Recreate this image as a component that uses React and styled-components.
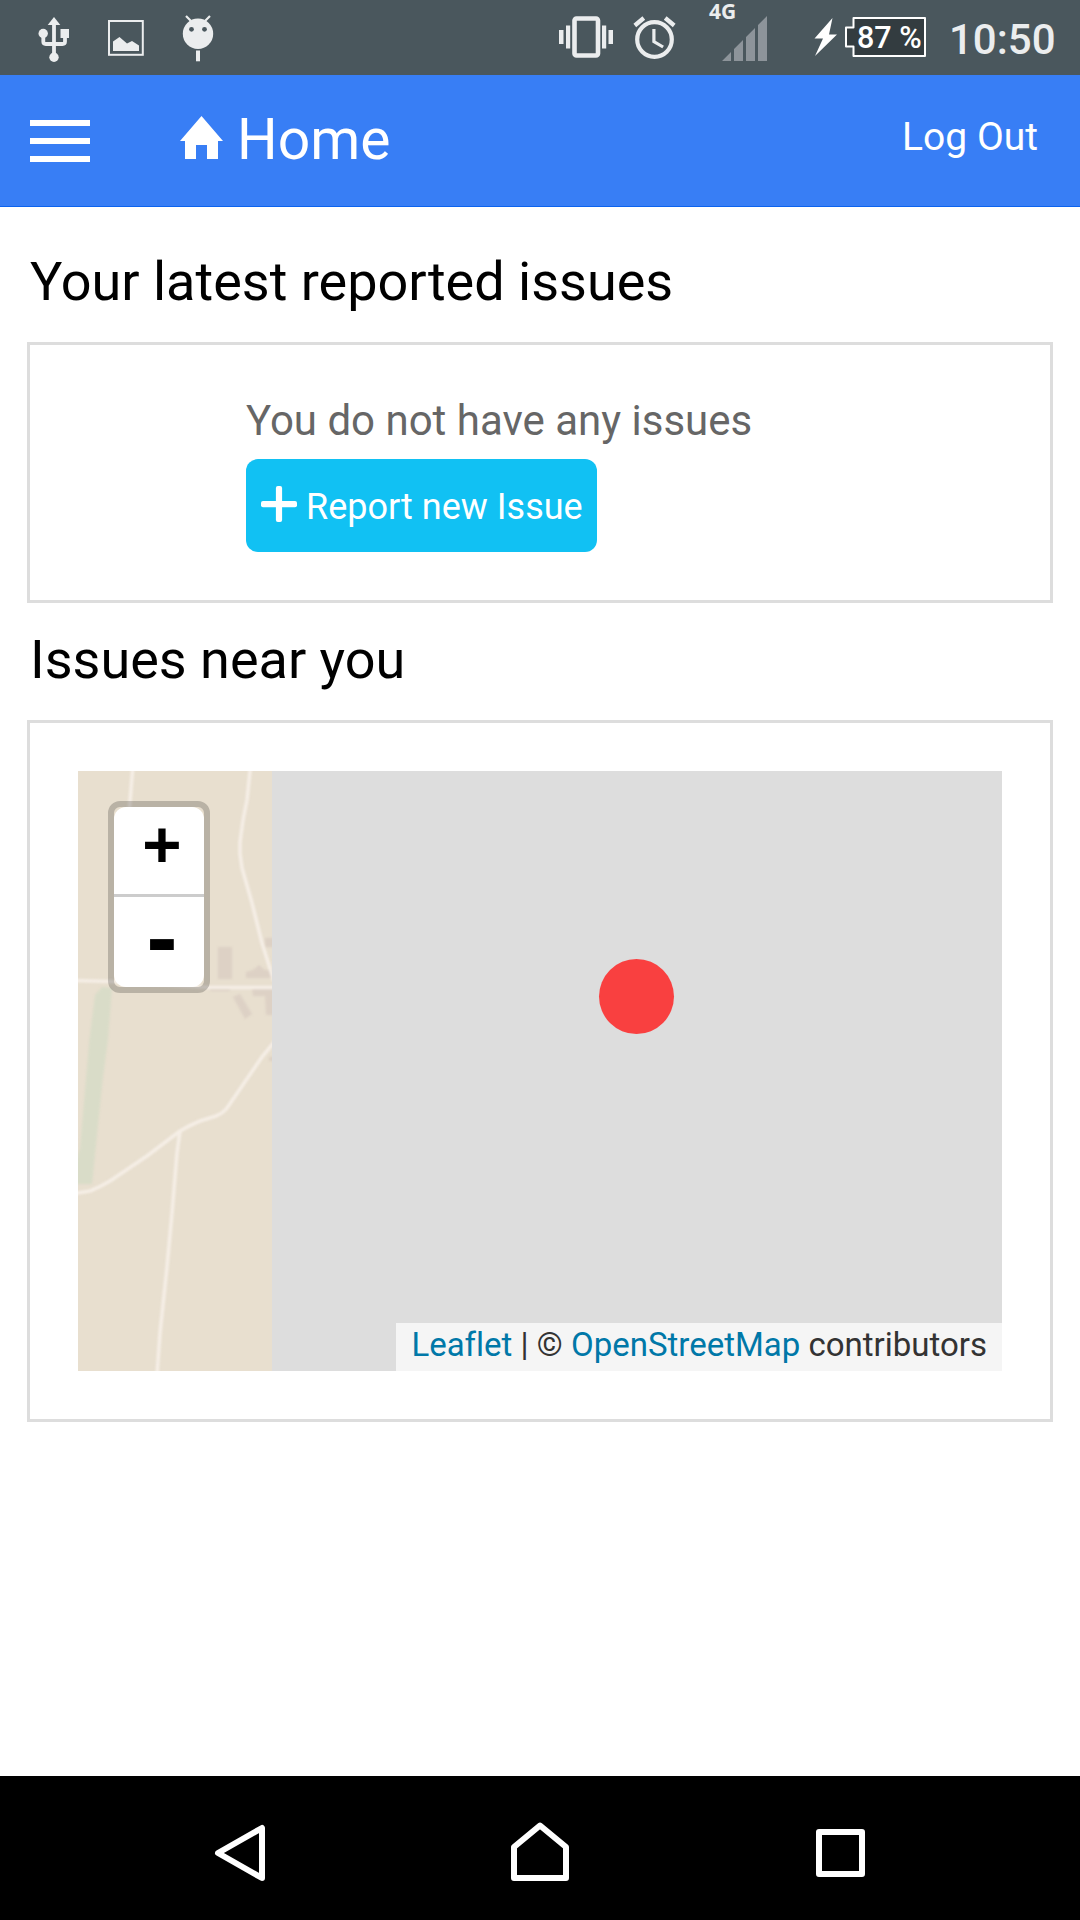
import React from 'react';
import styled, { createGlobalStyle } from 'styled-components';

const Global = createGlobalStyle`
  * { box-sizing: border-box; }
  body { margin: 0; background: #fff; font-family: Roboto, "Noto Sans", sans-serif; font-variant-ligatures: none; }
  svg { display: block; flex: none; }
`;

const Screen = styled.div`
  width: 1080px;
  height: 1920px;
  display: flex;
  flex-direction: column;
  background: #fff;
  overflow: hidden;
`;

const StatusBar = styled.div`
  height: 75px;
  flex: none;
  display: flex;
  justify-content: space-between;
  padding: 0 25px 0 38px;
  background: #4a575d;
  color: #ebedee;
`;

const StatusGroup = styled.div`
  display: flex;
  gap: ${(p) => p.$gap}px;
`;

const Signal = styled.div`
  width: 60px;
  margin: 0 25px 0 13px;
  display: flex;
  flex-direction: column;
`;

const Network = styled.span`
  height: 16px;
  font: 700 21px/22px "Noto Sans", sans-serif;
`;

const Bars = styled.div`
  padding-left: 13px;
`;

const Battery = styled.div`
  display: grid;
  > * { grid-area: 1 / 1; }
`;

const BatteryLevel = styled.span`
  padding-left: 12px;
  font-size: 30.5px;
  font-weight: 500;
  line-height: 75px;
  color: #fff;
  white-space: nowrap;
`;

const Clock = styled.time`
  width: 106px;
  margin-left: 15px;
  font-size: 42px;
  font-weight: 500;
  line-height: 80px;
  white-space: nowrap;
`;

const Header = styled.header`
  height: 132px;
  flex: none;
  display: flex;
  align-items: flex-start;
  background: #387ef5;
  border-bottom: 1px solid #0c63ee;
  color: #fff;
`;

const MenuButton = styled.button`
  width: 60px;
  height: 42px;
  margin: 45px 90px 0 30px;
  padding: 0;
  border: 0;
  background: none;
  display: flex;
  flex-direction: column;
  gap: 12px;
`;

const MenuLine = styled.span`
  height: 6px;
  background: #fff;
`;

const PageTitle = styled.h1`
  margin: 0;
  display: flex;
  gap: 14px;
  font-size: 57px;
  font-weight: 400;
  line-height: 129px;
`;

const LogOut = styled.a`
  margin: 0 42px 0 auto;
  font-size: 39px;
  line-height: 125px;
`;

const Content = styled.main`
  flex: 1;
  display: flex;
  flex-direction: column;
  padding: 45px 27px 0;
`;

const SectionTitle = styled.h2`
  margin: 0 0 30px 3px;
  font-size: 54px;
  font-weight: 400;
  line-height: 60px;
  color: #000;
`;

const Panel = styled.section`
  height: ${(p) => p.$height}px;
  margin-bottom: 27px;
  padding: ${(p) => p.$padding};
  border: 3px solid #ddd;
`;

const EmptyText = styled.p`
  margin: 0 0 8px;
  font-size: 42px;
  line-height: 60px;
  color: #666;
`;

const ReportButton = styled.button`
  width: 351px;
  height: 93px;
  padding: 0 15px;
  display: flex;
  align-items: center;
  gap: 9px;
  border: 0;
  border-radius: 12px;
  background: #11c1f3;
  color: #fff;
  font: 400 36px/60px Roboto, sans-serif;
  white-space: nowrap;
`;

const ButtonLabel = styled.span`
  padding-top: 2px;
`;

const MapView = styled.div`
  position: relative;
  width: 924px;
  height: 600px;
  background: #ddd;
  overflow: hidden;
`;

const TileFeatures = styled.g`
  filter: blur(0.8px);
`;

const ZoomControl = styled.div`
  position: absolute;
  left: 30px;
  top: 30px;
  width: 102px;
  border: 6px solid rgba(0, 0, 0, 0.2);
  border-radius: 12px;
  background-clip: padding-box;
`;

const ZoomButton = styled.button`
  width: 90px;
  height: 90px;
  display: block;
  padding: ${(p) => p.$padding};
  border: 0 solid #ccc;
  border-bottom-width: ${(p) => (p.$first ? 3 : 0)}px;
  border-radius: ${(p) => (p.$first ? '12px 12px 0 0' : '0 0 12px 12px')};
  background: #fff;
  color: #000;
  font: 700 ${(p) => p.$size}px/60px "DejaVu Sans Mono", monospace;
  text-align: center;
`;

const Marker = styled.span`
  position: absolute;
  left: 521px;
  top: 188px;
  width: 75px;
  height: 75px;
  border-radius: 50%;
  background: #f94040;
`;

const Attribution = styled.div`
  position: absolute;
  right: 0;
  bottom: 0;
  height: 48px;
  padding: 0 15px;
  background: rgba(255, 255, 255, 0.7);
  color: #333;
  font-size: 33px;
  line-height: 43px;
  white-space: nowrap;
`;

const MapLink = styled.a`
  color: #0078a8;
`;

const NavBar = styled.nav`
  height: 144px;
  flex: none;
  display: flex;
  justify-content: center;
  gap: 240px;
  background: #000;
`;

const UsbIcon = () => (
  <svg width="32" height="75" viewBox="38 0 32 75" fill="#ebedee">
    <path d="M54 17l6.3 8H47.7z" />
    <path d="M54 23v34M43.300 34v7.500q0 2.500 2.500 2.500h16.700q2.500 0 2.500-2.500V34" fill="none" stroke="#ebedee" strokeWidth="3.800" />
    <circle cx="43.200" cy="33.500" r="4.700" />
    <path d="M60.500 29h8.500v9h-8.500z" />
    <circle cx="54" cy="57.200" r="4.700" />
  </svg>
);

const PictureIcon = () => (
  <svg width="36" height="75" viewBox="108 0 36 75">
    <rect x="109" y="21" width="33.800" height="33.800" fill="none" stroke="#ebedee" strokeWidth="2" />
    <path d="M113 51V41.500l6.500-4.500 7.500 6.500 5-2.500 7 4.500V51z" fill="#ebedee" />
  </svg>
);

const DroidIcon = () => (
  <svg width="32" height="75" viewBox="182 0 32 75" fill="#ebedee">
    <path d="M186 16l5 5M210 16l-5 5" stroke="#ebedee" strokeWidth="2.200" />
    <circle cx="198" cy="33.700" r="15.200" />
    <circle cx="191.500" cy="29.300" r="2.400" fill="#4a575d" />
    <circle cx="204.500" cy="29.300" r="2.400" fill="#4a575d" />
    <path d="M196 50.500h4v10.800h-4z" />
  </svg>
);

const VibrateIcon = () => (
  <svg width="54" height="75" viewBox="559 0 54 75" fill="#ebedee">
    <rect x="574.500" y="18.500" width="23.500" height="37" rx="2" fill="none" stroke="#ebedee" strokeWidth="4.600" />
    <path d="M559 30h4.500v14H559zM566 25.500h4.200v23H566zM602 25.500h4.200v23H602zM608.500 30h4.500v14h-4.500z" />
  </svg>
);

const AlarmIcon = () => (
  <svg width="43" height="75" viewBox="633 0 43 75" fill="none" stroke="#ebedee">
    <circle cx="654.500" cy="39.500" r="17.300" strokeWidth="4.200" />
    <path d="M634.800 25.500l9-7.500M665.200 18l9 7.500" strokeWidth="4.300" />
    <path d="M653.900 29v12.500l9.200 5.500" strokeWidth="3.200" />
  </svg>
);

const SignalIcon = () => (
  <svg width="45" height="45" viewBox="722 16 45 45" fill="#8d949a">
    <path d="M722 61l9-9v9zM734 61V49l9-9v21zM746 61V37l9-9v33zM758 61V25l9-9v45z" />
  </svg>
);

const BoltIcon = () => (
  <svg width="23" height="75" viewBox="814 0 23 75" fill="#fff">
    <path d="M832.500 18l-18 20.500h8.500L815 56l22-21.500h-8z" />
  </svg>
);

const BatteryIcon = () => (
  <svg width="81" height="75" viewBox="845 0 81 75">
    <path d="M853.500 18h71.500v38h-71.500v-9.500H846v-19h7.500z" fill="#333c40" stroke="#fff" strokeWidth="2" strokeLinejoin="round" />
  </svg>
);

const HomeIcon = () => (
  <svg width="43" height="131" viewBox="180 75 43 131" fill="#fff">
    <path d="M201.500 116l21.500 25h-5v18h-11v-14h-11v14h-11v-18h-5z" />
  </svg>
);

const PlusIcon = () => (
  <svg width="36" height="42" viewBox="261 484.500 36 42" fill="#fff">
    <rect x="261" y="500.500" width="36" height="6.200" rx="2" />
    <rect x="275.900" y="485.600" width="6.200" height="36" rx="2" />
  </svg>
);

const MapTile = () => (
  <svg width="194" height="600" viewBox="0 0 194 600">
    <path d="M0 0h194v600H0z" fill="#e8dfcf" />
    <TileFeatures>
      <path d="M24 216l10 1-4 52-5 37-11 107H-5v-12l7-24 9.300-108L17 224z" fill="#d9dcc8" />
      <path
        d="M140 176h14v32h-14zM155 226l7-3 12 20-7 5zM168 201l7-2 6-5 6 5 13-1v9h-32zM174 218h26v26h-12l-1-19h-12zM187 167h13v9h-13zM132 217h20v3h-20zM191 286h9v4h-9z"
        fill="#ddd1c5"
      />
      <g fill="none" stroke="#f5eee6" strokeWidth="3.600" strokeLinejoin="round">
        <path d="M54.500-4V0L51.500 36Q50 70 50 100" />
        <path d="M172-4v4l-3 29-4 20-3 22v12l2 14 10 35 10 40 12 38" />
        <path d="M-4 209.500l36 1 100 6h68" />
        <path d="M-4 422.500l16-2.500q10-4 20-10l37-25 33-25q10-6 20-10l16-5q7-3 11-8l26-38 9-13 14-17" />
        <path d="M102 360l-3 22-5 60-5 54-7 66-3 42" />
      </g>
    </TileFeatures>
  </svg>
);

const BackIcon = () => (
  <svg width="60" height="144" viewBox="210 1776 60 144" fill="none" stroke="#fff" strokeWidth="6" strokeLinejoin="round">
    <path d="M262 1828v50l-44-25z" />
  </svg>
);

const NavHomeIcon = () => (
  <svg width="60" height="144" viewBox="510 1776 60 144" fill="none" stroke="#fff" strokeWidth="6" strokeLinejoin="round">
    <path d="M540 1825.500l26 21.500v31h-52v-31z" />
  </svg>
);

const RecentIcon = () => (
  <svg width="60" height="144" viewBox="810 1776 60 144" fill="none" stroke="#fff" strokeWidth="6" strokeLinejoin="round">
    <path d="M819 1832h43v42h-43z" />
  </svg>
);

export default function App() {
  return (
    <Screen>
      <Global />
      <StatusBar>
        <StatusGroup $gap={38}>
          <UsbIcon />
          <PictureIcon />
          <DroidIcon />
        </StatusGroup>
        <StatusGroup $gap={20}>
          <VibrateIcon />
          <AlarmIcon />
          <Signal>
            <Network>4G</Network>
            <Bars>
              <SignalIcon />
            </Bars>
          </Signal>
          <StatusGroup $gap={8}>
            <BoltIcon />
            <Battery>
              <BatteryIcon />
              <BatteryLevel>87 %</BatteryLevel>
            </Battery>
            <Clock>10:50</Clock>
          </StatusGroup>
        </StatusGroup>
      </StatusBar>
      <Header>
        <MenuButton aria-label="Menu">
          <MenuLine />
          <MenuLine />
          <MenuLine />
        </MenuButton>
        <PageTitle>
          <HomeIcon />
          Home
        </PageTitle>
        <LogOut>Log Out</LogOut>
      </Header>
      <Content>
        <SectionTitle>Your latest reported issues</SectionTitle>
        <Panel $height={261} $padding="46px 0 0 216px">
          <EmptyText>You do not have any issues</EmptyText>
          <ReportButton>
            <PlusIcon />
            <ButtonLabel>Report new Issue</ButtonLabel>
          </ReportButton>
        </Panel>
        <SectionTitle>Issues near you</SectionTitle>
        <Panel $height={702} $padding="48px">
          <MapView>
            <MapTile />
            <Marker />
            <ZoomControl>
              <ZoomButton $first $size={63} $padding="0 0 13px 6px">+</ZoomButton>
              <ZoomButton $size={77} $padding="0 0 2px 6px">-</ZoomButton>
            </ZoomControl>
            <Attribution>
              <MapLink>Leaflet</MapLink> | © <MapLink>OpenStreetMap</MapLink> contributors
            </Attribution>
          </MapView>
        </Panel>
      </Content>
      <NavBar>
        <BackIcon />
        <NavHomeIcon />
        <RecentIcon />
      </NavBar>
    </Screen>
  );
}
